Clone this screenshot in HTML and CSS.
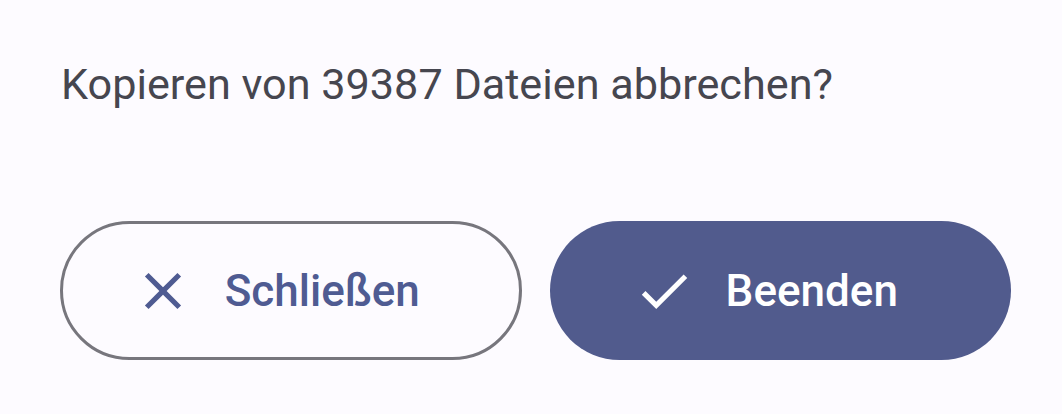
FILE: index.html
```html
<!DOCTYPE html>
<html lang="de">
<head>
<meta charset="utf-8">
<link rel="stylesheet" href="styles.css">
</head>
<body>
<div class="dialog">
  <p class="message">Kopieren von 39387 Dateien abbrechen?</p>
  <div class="actions">
    <button class="btn btn-outline">
      <svg class="icon" viewBox="0 0 24 24"><path d="M19 6.41L17.59 5 12 10.59 6.41 5 5 6.41 10.59 12 5 17.59 6.41 19 12 13.41 17.59 19 19 17.59 13.41 12z"/></svg>
      <span class="label">Schließen</span>
    </button>
    <button class="btn btn-filled">
      <svg class="icon" viewBox="0 0 24 24"><path d="M9 16.17L4.83 12l-1.42 1.41L9 19 21 7l-1.41-1.41z"/></svg>
      <span class="label">Beenden</span>
    </button>
  </div>
</div>
</body>
</html>
```
FILE: styles.css
```css
html, body {
  margin: 0;
  padding: 0;
  background: #fdfbff;
  height: 100%;
}
.dialog {
  display: flex;
  flex-direction: column;
  padding: 0 51px 0 60px;
  font-family: Roboto, "Liberation Sans", sans-serif;
}
.message {
  margin: 57px 0 0 1px;
  font-size: 43.2px;
  line-height: 56px;
  color: #46464f;
  font-weight: 400;
}
.actions {
  display: grid;
  grid-template-columns: 1fr 1fr;
  gap: 28px;
  margin-top: 108px;
}
.btn {
  height: 139px;
  border-radius: 70px;
  display: flex;
  align-items: center;
  justify-content: center;
  gap: 31px;
  padding: 0 30px 0 0;
  font-family: Roboto, "Liberation Sans", sans-serif;
  font-size: 44px;
  font-weight: 500;
  box-sizing: border-box;
  cursor: pointer;
}
.btn-outline {
  background: transparent;
  border: 3px solid #77767d;
  color: #4f5b92;
}
.btn-outline .icon { fill: #4f5b92; }
.btn-filled {
  background: #515b8d;
  border: none;
  color: #ffffff;
}
.btn-filled .icon { fill: #ffffff; }
.icon {
  width: 62px;
  height: 62px;
  flex: none;
}
.label { line-height: 1; }
```
